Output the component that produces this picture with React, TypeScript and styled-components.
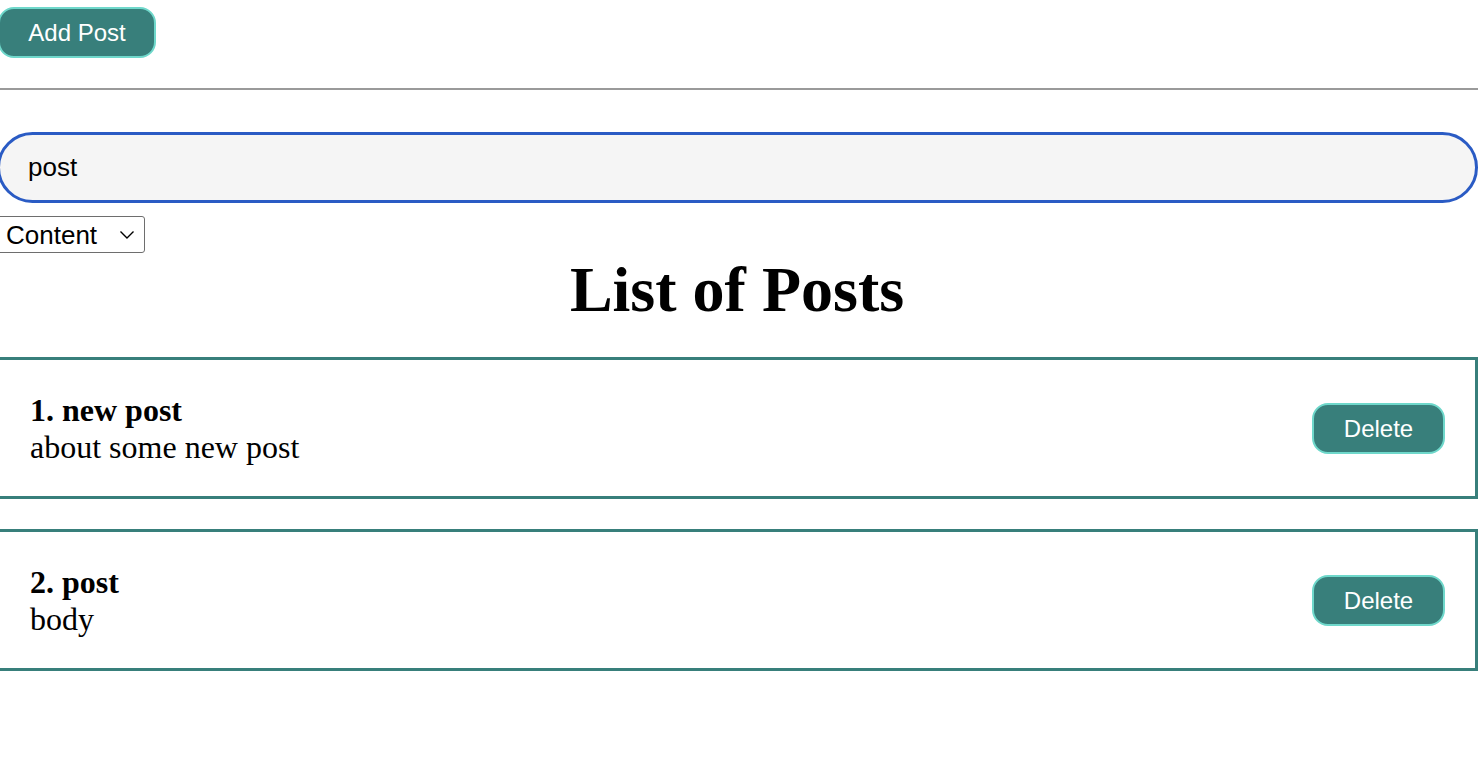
import React from "react";
import styled, { createGlobalStyle } from "styled-components";

const Global = createGlobalStyle`
  html, body { margin: 0; padding: 0; background: #fff; }
  body { font-family: "Liberation Serif", "Times New Roman", serif; overflow: hidden; }
`;

const Page = styled.div`
  margin: 7px 2px 0 -3px;
  display: flex;
  flex-direction: column;
`;

const TealButton = styled.button`
  background: #387f7b;
  color: #fff;
  border: 2px solid #6fd8cb;
  border-radius: 16px;
  font-family: "Liberation Sans", Arial, sans-serif;
  font-size: 24px;
  height: 51px;
  padding: 0;
  cursor: pointer;
`;

const TopBar = styled.div`
  display: flex;
`;

const AddButton = styled(TealButton)`
  width: 158px;
  height: 51px;
  margin-left: 1px;
`;

const Rule = styled.hr`
  margin: 30px 0 0 0;
  border: none;
  border-top: 2px solid #9a9a9a;
  height: 0;
`;

const Search = styled.input`
  margin-top: 42px;
  height: 71px;
  box-sizing: border-box;
  border: 3px solid #2a5bc4;
  border-radius: 36px;
  background: #f5f5f5;
  font-family: "Liberation Sans", Arial, sans-serif;
  font-size: 26px;
  padding: 0 28px 0 28px;
  outline: none;
  color: #000;
  caret-color: #000;
`;

const chevron =
  "url(\"data:image/svg+xml;utf8,<svg xmlns='http://www.w3.org/2000/svg' width='16' height='10' viewBox='0 0 16 10'><path d='M1.5 1.5 L8 8 L14.5 1.5' fill='none' stroke='black' stroke-width='1.4'/></svg>\")";

const Sort = styled.select`
  align-self: flex-start;
  margin-top: 13px;
  height: 37px;
  width: 148px;
  font-family: "Liberation Sans", Arial, sans-serif;
  font-size: 26px;
  border: 1.5px solid #6e6e6e;
  border-radius: 3px;
  background: #fff ${chevron} no-repeat right 9px center;
  background-size: 16px 10px;
  appearance: none;
  -webkit-appearance: none;
  padding: 0 0 0 8px;
  color: #000;
`;

const Heading = styled.h1`
  margin: 0;
  text-align: center;
  font-size: 64px;
  line-height: 74px;
  font-weight: bold;
  padding-right: 1px;
`;

const List = styled.div`
  margin-top: 30px;
  display: flex;
  flex-direction: column;
  gap: 30px;
`;

const Card = styled.div`
  height: 142px;
  box-sizing: border-box;
  border: 3px solid #387f7b;
  display: flex;
  align-items: center;
  justify-content: space-between;
  padding: 0 30px 0 30px;
`;

const CardText = styled.div`
  display: flex;
  flex-direction: column;
  font-size: 32px;
  line-height: 37px;
  padding-top: 1px;
`;

const Title = styled.strong`
  font-weight: bold;
`;

const DeleteButton = styled(TealButton)`
  width: 133px;
  margin-top: 1px;
`;

const posts = [
  { id: 1, title: "new post", body: "about some new post" },
  { id: 2, title: "post", body: "body" },
];

export default function App() {
  return (
    <>
      <Global />
      <Page>
        <TopBar>
          <AddButton>Add Post</AddButton>
        </TopBar>
        <Rule />
        <Search defaultValue="post" autoFocus />
        <Sort defaultValue="body">
          <option value="title">Title</option>
          <option value="body">Content</option>
        </Sort>
        <Heading>List of Posts</Heading>
        <List>
          {posts.map((p) => (
            <Card key={p.id}>
              <CardText>
                <Title>
                  {p.id}. {p.title}
                </Title>
                <span>{p.body}</span>
              </CardText>
              <DeleteButton>Delete</DeleteButton>
            </Card>
          ))}
        </List>
      </Page>
    </>
  );
}
